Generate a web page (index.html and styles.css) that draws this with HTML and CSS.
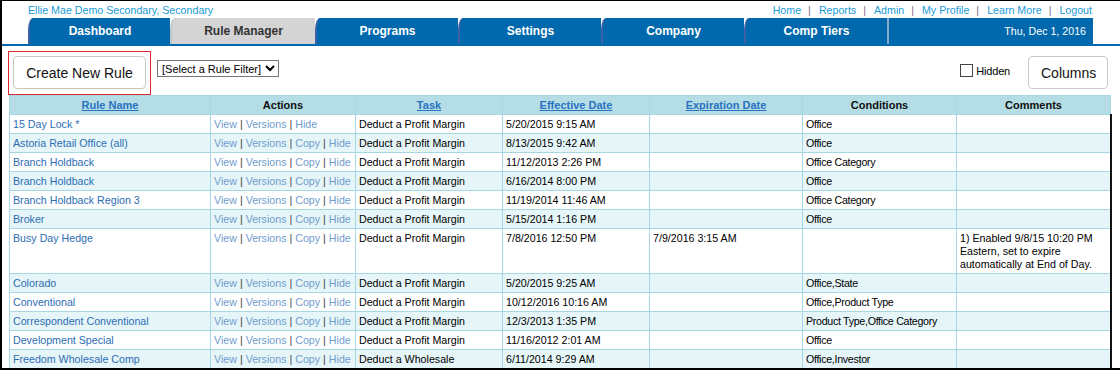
FILE: index.html
```html
<!DOCTYPE html>
<html lang="en">
<head>
    <meta charset="UTF-8">
    <title>Rule Manager</title>
    <link rel="stylesheet" href="styles.css">
</head>
<body>
    <div class="frame">
        <div class="top-links">
            <a class="user" href="#">Ellie Mae Demo Secondary, Secondary</a>
            <nav class="util">
                <a href="#">Home</a><span class="sep">|</span>
                <a href="#">Reports</a><span class="sep">|</span>
                <a href="#">Admin</a><span class="sep">|</span>
                <a href="#">My Profile</a><span class="sep">|</span>
                <a href="#">Learn More</a><span class="sep">|</span>
                <a href="#">Logout</a>
            </nav>
        </div>

        <div class="tabbar">
            <a class="tab" href="#">Dashboard</a>
            <a class="tab active" href="#">Rule Manager</a>
            <a class="tab" href="#">Programs</a>
            <a class="tab" href="#">Settings</a>
            <a class="tab" href="#">Company</a>
            <a class="tab" href="#">Comp Tiers</a>
            <div class="tab date">Thu, Dec 1, 2016</div>
        </div>

        <div class="toolbar">
            <div class="highlight">
                <button class="btn">Create New Rule</button>
            </div>
            <select class="filter">
                <option>[Select a Rule Filter]</option>
            </select>
            <div class="tools-right">
                <label class="hidden-toggle"><input type="checkbox"> Hidden</label>
                <button class="btn">Columns</button>
            </div>
        </div>

        <table class="rules">
            <colgroup>
                <col style="width: 201px">
                <col style="width: 145px">
                <col style="width: 147px">
                <col style="width: 147px">
                <col style="width: 153px">
                <col style="width: 154px">
                <col style="width: 154px">
            </colgroup>
            <thead>
                <tr>
                    <th><a href="#">Rule Name</a></th>
                    <th>Actions</th>
                    <th><a href="#">Task</a></th>
                    <th><a href="#">Effective Date</a></th>
                    <th><a href="#">Expiration Date</a></th>
                    <th>Conditions</th>
                    <th>Comments</th>
                </tr>
            </thead>
            <tbody id="rule-rows"></tbody>
        </table>
    </div>

    <script>
        const rules = [
            ['15 Day Lock *', false, 'Deduct a Profit Margin', '5/20/2015 9:15 AM', '', 'Office', ''],
            ['Astoria Retail Office (all)', true, 'Deduct a Profit Margin', '8/13/2015 9:42 AM', '', 'Office', ''],
            ['Branch Holdback', true, 'Deduct a Profit Margin', '11/12/2013 2:26 PM', '', 'Office Category', ''],
            ['Branch Holdback', true, 'Deduct a Profit Margin', '6/16/2014 8:00 PM', '', 'Office', ''],
            ['Branch Holdback Region 3', true, 'Deduct a Profit Margin', '11/19/2014 11:46 AM', '', 'Office Category', ''],
            ['Broker', true, 'Deduct a Profit Margin', '5/15/2014 1:16 PM', '', 'Office', ''],
            ['Busy Day Hedge', true, 'Deduct a Profit Margin', '7/8/2016 12:50 PM', '7/9/2016 3:15 AM', '', '1) Enabled 9/8/15 10:20 PM Eastern, set to expire automatically at End of Day.'],
            ['Colorado', true, 'Deduct a Profit Margin', '5/20/2015 9:25 AM', '', 'Office,State', ''],
            ['Conventional', true, 'Deduct a Profit Margin', '10/12/2016 10:16 AM', '', 'Office,Product Type', ''],
            ['Correspondent Conventional', true, 'Deduct a Profit Margin', '12/3/2013 1:35 PM', '', 'Product Type,Office Category', ''],
            ['Development Special', true, 'Deduct a Profit Margin', '11/16/2012 2:01 AM', '', 'Office', ''],
            ['Freedom Wholesale Comp', true, 'Deduct a Wholesale Compensation Margin', '6/11/2014 9:29 AM', '', 'Office,Investor', '']
        ];

        const body = document.getElementById('rule-rows');
        rules.forEach(function (r) {
            const actions = ['View', 'Versions'];
            if (r[1]) actions.push('Copy');
            actions.push('Hide');
            const links = actions.map(function (a) {
                return '<a class="act" href="#">' + a + '</a>';
            }).join(' <span class="bar">|</span> ');

            const tr = document.createElement('tr');
            tr.innerHTML =
                '<td><a class="name" href="#">' + r[0] + '</a></td>' +
                '<td class="actions">' + links + '</td>' +
                '<td>' + r[2] + '</td>' +
                '<td>' + r[3] + '</td>' +
                '<td>' + r[4] + '</td>' +
                '<td class="cond">' + r[5] + '</td>' +
                '<td>' + r[6] + '</td>';
            body.appendChild(tr);
        });
    </script>
</body>
</html>
```

FILE: styles.css
```css
:root {
    --tab-blue: #0069ad;
    --link: #1a9ad6;
    --grid-head: #b4dde6;
    --grid-alt: #e5f5f8;
    --grid-line: #a7d7e2;
}

* {
    margin: 0;
    padding: 0;
    box-sizing: border-box;
}

body {
    font-family: "Liberation Sans", Arial, sans-serif;
    font-size: 8pt;
    color: #000;
    background: #fff;
    overflow: hidden;
}

a {
    text-decoration: none;
}

.frame {
    width: 1120px;
    height: 370px;
    border-style: solid;
    border-color: #000;
    border-width: 1px 0 2px 2px;
    overflow: hidden;
}

/* top links */
.top-links {
    height: 17px;
    display: flex;
    justify-content: space-between;
    align-items: center;
    padding: 0 28px 0 26px;
}

.top-links a {
    color: var(--link);
}

.util {
    display: flex;
    align-items: center;
}

.util .sep {
    color: #7a6a8a;
    margin: 0 8px 0 7px;
}

/* tabs */
.tabbar {
    display: flex;
    height: 28px;
    padding-left: 26px;
    border-bottom: 2px solid var(--tab-blue);
}

.tab {
    width: 143px;
    height: 26px;
    background: var(--tab-blue);
    color: #fff;
    font-size: 12px;
    font-weight: bold;
    display: flex;
    align-items: center;
    justify-content: center;
    border-left: 2px solid #3d5fa6;
    border-top-left-radius: 5px 12px;
}

.tab:first-child {
    width: 142px;
}

.tab.active {
    background: #d4d4d4;
    color: #333;
    width: 145px;
    border-left-color: #c0c6d0;
}

.tab.date {
    width: 206px;
    justify-content: flex-end;
    padding-right: 7px;
    font-size: 8pt;
    font-weight: normal;
    border-top-left-radius: 0;
    border-left: 2px solid #8aa8d0;
}

/* toolbar */
.toolbar {
    display: flex;
    align-items: flex-start;
    height: 49px;
    padding: 5px 12px 0 6px;
}

.highlight {
    border: 1px solid #e3262b;
    padding: 4px;
    width: 143px;
    height: 44px;
}

.btn {
    background: #fff;
    border: 1px solid #c8c8c8;
    border-radius: 4px;
    font-family: "Liberation Sans", Arial, sans-serif;
    font-size: 14px;
    color: #111;
    height: 33px;
    padding: 0 12px;
}

.highlight .btn {
    width: 133px;
}

.filter {
    margin: 9px 0 0 6px;
    width: 122px;
    height: 17px;
    font-family: "Liberation Sans", Arial, sans-serif;
    font-size: 11px;
    border: 1px solid #767676;
    background: #fff;
    color: #000;
}

.tools-right {
    margin-left: auto;
    display: flex;
    align-items: flex-start;
    padding-top: 5px;
}

.hidden-toggle {
    display: flex;
    align-items: center;
    font-size: 11px;
    margin-top: 8px;
    margin-right: 18px;
    letter-spacing: -0.2px;
}

.hidden-toggle input {
    appearance: none;
    width: 13px;
    height: 13px;
    border: 1px solid #444;
    background: #fff;
    margin-right: 3px;
}

.tools-right .btn {
    width: 80px;
}

/* grid */
.rules {
    border-collapse: collapse;
    table-layout: fixed;
    width: 1101px;
    margin-left: 7px;
}

.rules th,
.rules td {
    border: 1px solid var(--grid-line);
    padding: 3px 3px 2px;
    line-height: 13px;
    vertical-align: top;
    text-align: left;
    font-weight: normal;
}

.rules th {
    background: var(--grid-head);
    font-size: 11px;
    font-weight: bold;
    text-align: center;
    color: #111;
}

.rules th a {
    color: #2a72c0;
    text-decoration: underline;
}

.rules tbody tr:nth-child(even) td {
    background: var(--grid-alt);
}

.rules tbody td:last-child {
    border-right: 2px solid #111;
}

.name {
    color: #2d6db4;
}

.actions {
    color: #444;
    white-space: nowrap;
}

.act {
    color: #6f9ccd;
}

.cond {
    letter-spacing: -0.3px;
}
```
